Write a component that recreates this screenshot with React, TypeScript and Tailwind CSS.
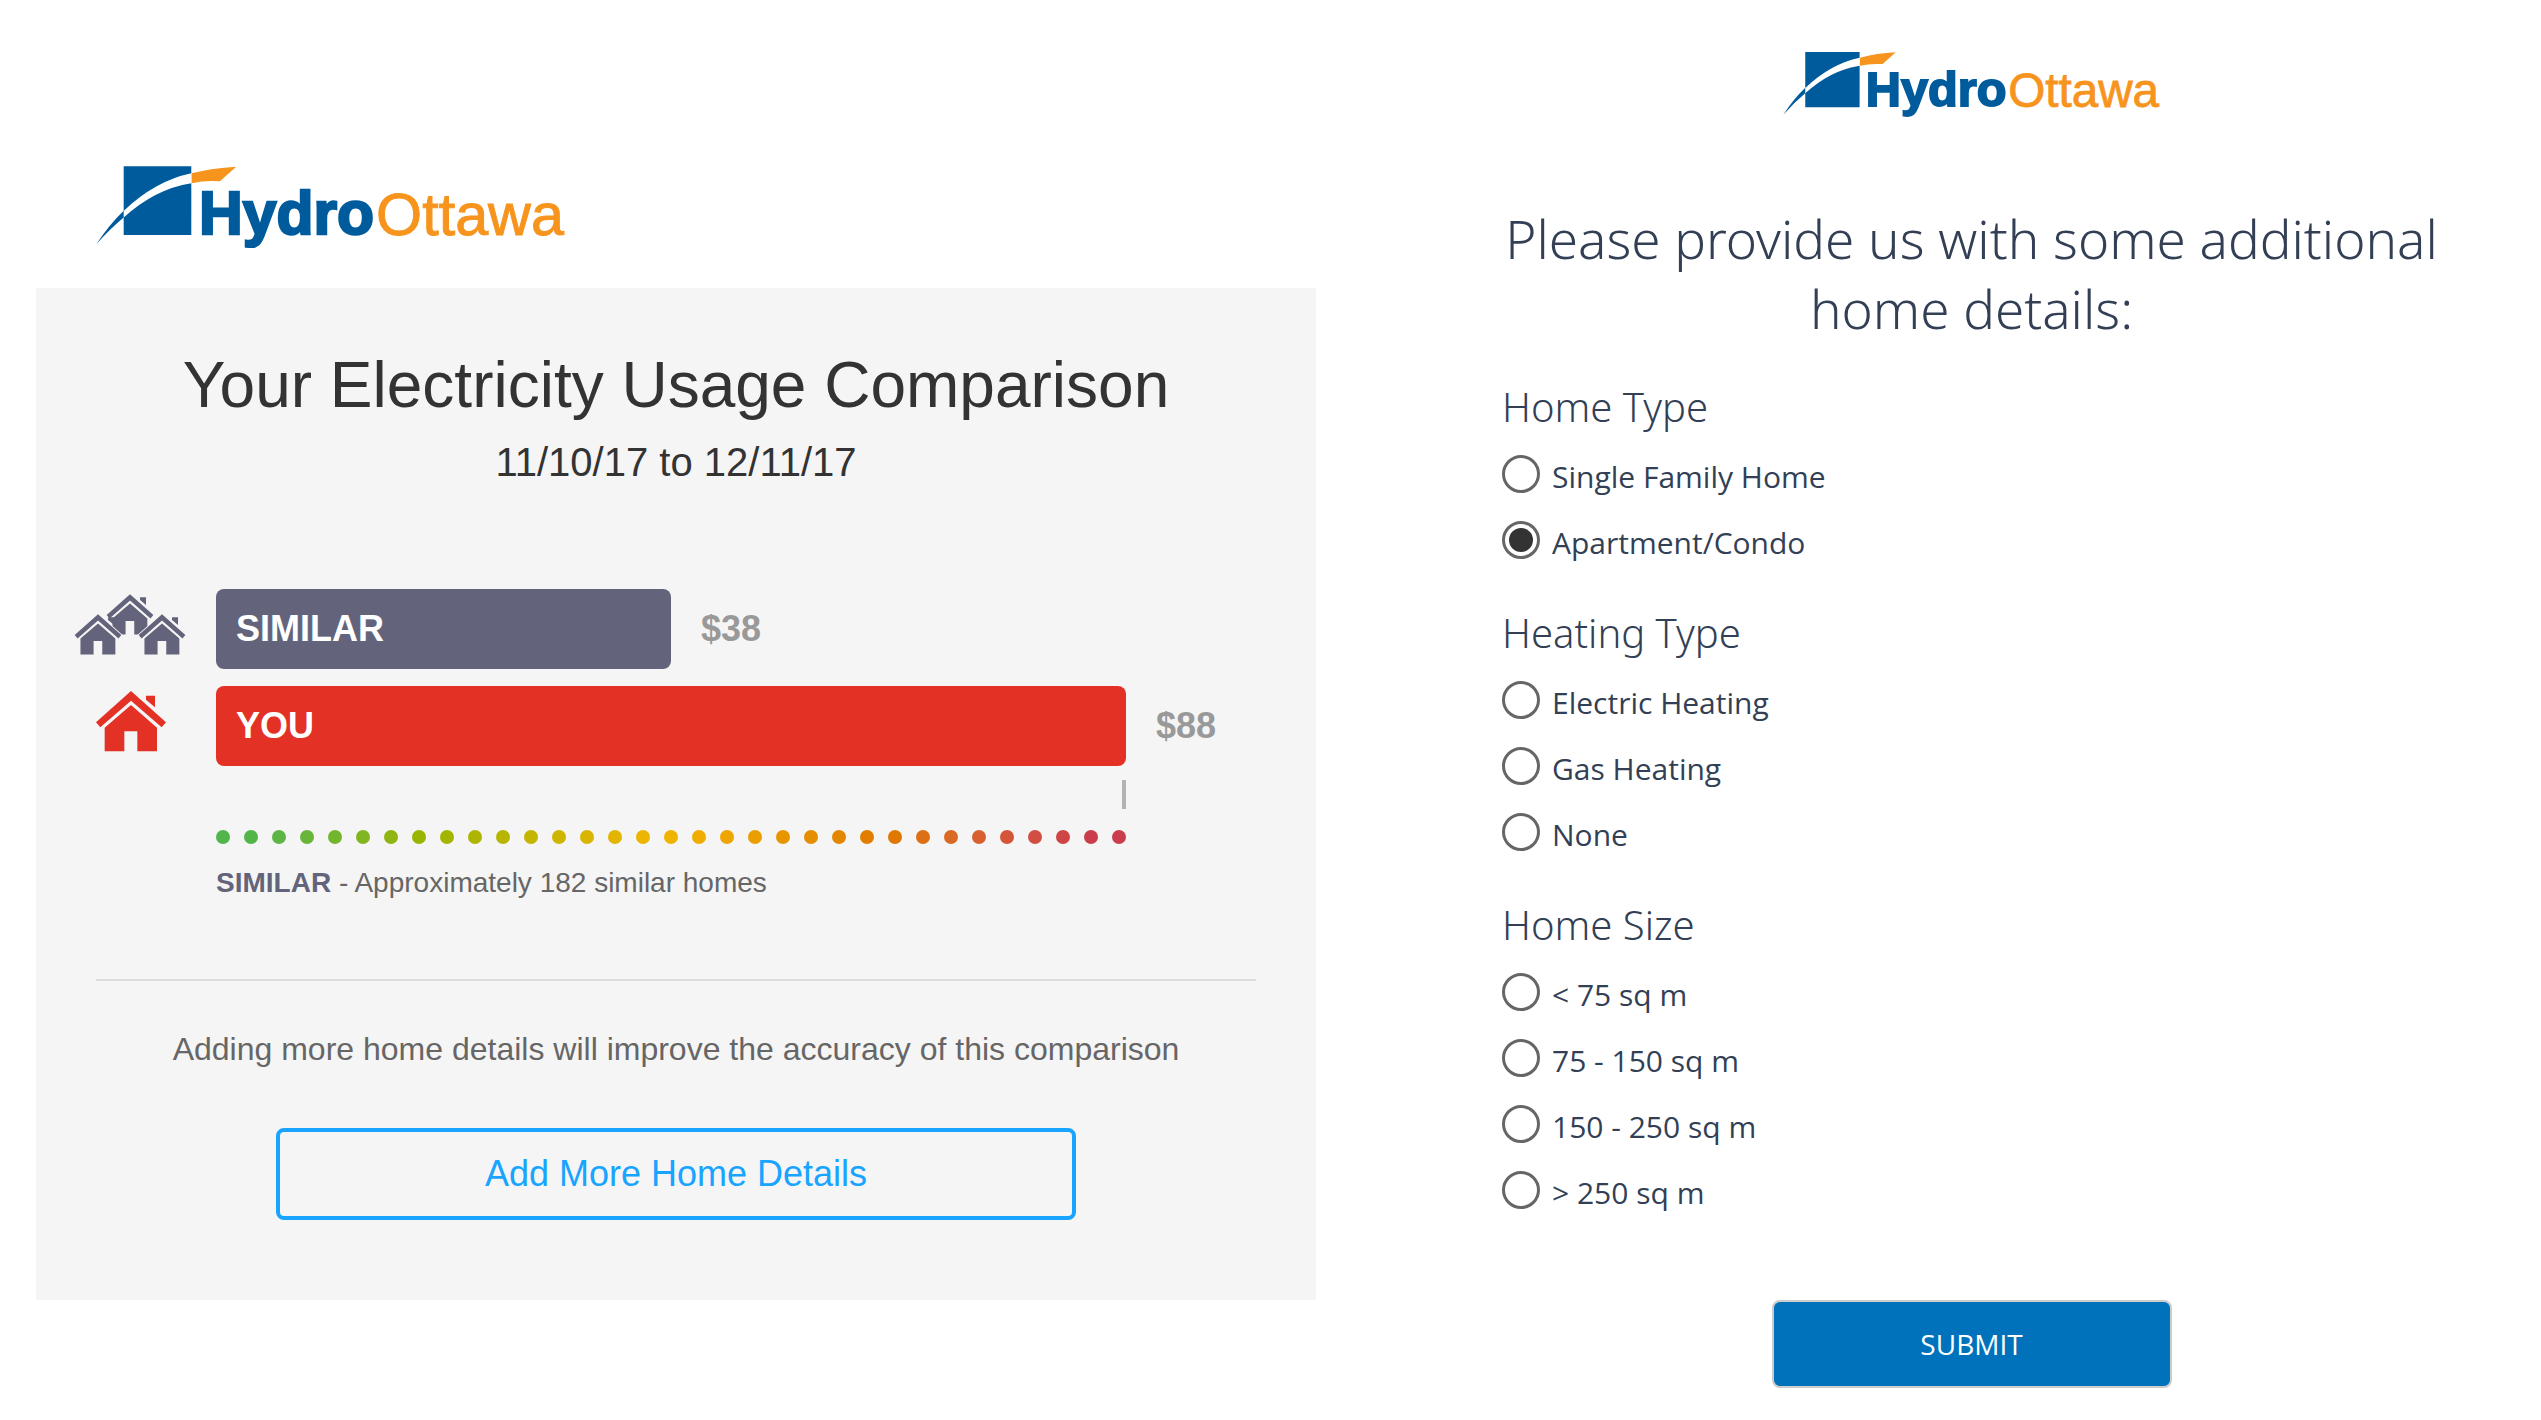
import React, { useState } from 'react';

function Logo({ className }: { className: string }) {
  return (
    <svg viewBox="48 74 1408 248" className={className} role="img" aria-label="HydroOttawa">
      <path fill="#005b9c" d="M131 78H334V99Q225 122 131 212Z" />
      <path fill="#005b9c" d="M131 232Q225 146 334 129V284H131Z" />
      <path fill="#005b9c" d="M131 211V232Q90 266 49 312Q85 255 131 211Z" />
      <path fill="#f7941d" d="M335 99Q396 83 469 79L420 123Q374 120 335 129Z" />
      <text x="357" y="281" fontFamily="Liberation Sans, sans-serif" fontWeight="700" fontSize="182" fill="#005b9c" stroke="#005b9c" strokeWidth="7">
        Hydro
      </text>
      <text x="889" y="283" fontFamily="Liberation Sans, sans-serif" fontSize="178" fill="#f7941d" stroke="#f7941d" strokeWidth="3">
        Ottawa
      </text>
    </svg>
  );
}

const ROOF = 'M213 368L318 462L305 477L213 397L121 477L108 462Z';
const CHIMNEY = 'M258 382H285V417L258 394Z';
const BODY = 'M213 410L291 478V549H232V489H193V549H134V478Z';

function House({ halo }: { halo?: boolean }) {
  return (
    <g>
      {halo && <path d="M213 368L318 462L305 477L291 478V549H134V478L121 477L108 462Z" fill="#f5f5f5" stroke="#f5f5f5" strokeWidth="8" />}
      <path d={CHIMNEY} />
      <path d={ROOF} />
      <path d={BODY} />
    </g>
  );
}

function HomeIcon() {
  return (
    <svg viewBox="108 368 210 182" className="w-[70px] fill-[#e43126]" aria-hidden="true">
      <House />
    </svg>
  );
}

function NeighbourhoodIcon() {
  return (
    <svg viewBox="42 78 336 181" className="w-[112px] fill-[#63647b]" aria-hidden="true">
      <g transform="translate(68 -167) scale(.667)">
        <House />
      </g>
      <g transform="translate(-28 -107) scale(.667)">
        <House halo />
      </g>
      <g transform="translate(164 -107) scale(.667)">
        <House halo />
      </g>
    </svg>
  );
}

const DOTS = [
  '#52b54a', '#52b54a', '#5cb545', '#68b53a', '#74b52e', '#82b522', '#8fb512', '#9ab500', '#a3b500',
  '#aeb500', '#b8b500', '#c3b500', '#ceb500', '#d9b500', '#e3b500', '#ecb500', '#f0b400', '#f0ad00',
  '#eea500', '#eb9e00', '#e89600', '#e58e00', '#e38600', '#e17e00', '#df7800', '#dd7014', '#da6924',
  '#d75f30', '#d4553a', '#d04e42', '#cd4545', '#ca3e4b', '#ca3d4d',
];

const BARS = [
  { label: 'SIMILAR', value: 38, share: 50, color: 'bg-[#63647b]', icon: <NeighbourhoodIcon />, pad: 'pl-[38px]' },
  { label: 'YOU', value: 88, share: 100, color: 'bg-[#e43126]', icon: <HomeIcon />, pad: 'pl-[60px]' },
];

function Comparison() {
  return (
    <section className="pl-9 pt-[165px] font-['Liberation_Sans',sans-serif]">
      <Logo className="ml-[60px] block w-[469px]" />
      <div className="mt-10 bg-[#f5f5f5] pb-20 pt-[61px]">
        <h1 className="text-center text-[64px] leading-[72px] text-[#333]">Your Electricity Usage Comparison</h1>
        <p className="mt-[17px] text-center text-[40px] leading-[48px] text-[#333]">11/10/17 to 12/11/17</p>

        <div className="mt-[103px] flex flex-col gap-[17px]">
          {BARS.map((bar) => (
            <div key={bar.label} className="flex items-center">
              <div className={`w-[180px] pb-2 ${bar.pad}`}>{bar.icon}</div>
              <div className="mr-[190px] flex flex-1 items-center text-[36px] font-bold">
                <div className={`flex h-20 shrink-0 items-center rounded-lg pl-5 text-white ${bar.color}`} style={{ width: `${bar.share}%` }}>
                  {bar.label}
                </div>
                <span className="ml-[30px] text-[#999]">${bar.value}</span>
              </div>
            </div>
          ))}
        </div>

        <div className="ml-[180px] mr-[190px] mt-[14px]">
          <div className="ml-auto h-[29px] w-1 bg-[#b3b3b3]" />
          <div className="mt-[21px] flex justify-between">
            {DOTS.map((color, i) => (
              <span key={i} className="size-[14px] rounded-full" style={{ backgroundColor: color }} />
            ))}
          </div>
          <p className="mt-[23px] text-[28px] leading-8 text-[#666]">
            <strong className="text-[#63647b]">SIMILAR</strong> - Approximately 182 similar homes
          </p>
        </div>

        <hr className="mx-[60px] mt-20 border-t-2 border-[#dcdcdc]" />
        <p className="mt-[50px] text-center text-[32px] leading-9 text-[#666]">
          Adding more home details will improve the accuracy of this comparison
        </p>
        <button type="button" className="mx-auto mt-[61px] block h-[92px] w-5/8 rounded-lg border-4 border-[#18a4ff] text-[36px] text-[#18a4ff]">
          Add More Home Details
        </button>
      </div>
    </section>
  );
}

const GROUPS = [
  { name: 'Home Type', options: ['Single Family Home', 'Apartment/Condo'] },
  { name: 'Heating Type', options: ['Electric Heating', 'Gas Heating', 'None'] },
  { name: 'Home Size', options: ['< 75 sq m', '75 - 150 sq m', '150 - 250 sq m', '> 250 sq m'] },
];

function DetailsForm() {
  const [picked, setPicked] = useState<Record<string, string>>({ 'Home Type': 'Apartment/Condo' });
  return (
    <section className="pl-[186px] pr-[100px] pt-[51px] font-['Open_Sans',sans-serif] text-[#333f55]">
      <Logo className="mx-auto block w-[377px]" />
      <h2 className="mt-[87px] text-center font-['Noto_Sans',sans-serif] text-[53px] font-light leading-[70px]">
        Please provide us with some additional home details:
      </h2>
      <form className="mt-[35px]" onSubmit={(e) => e.preventDefault()}>
        <div className="flex flex-col gap-8">
          {GROUPS.map((group) => (
            <fieldset key={group.name}>
              <legend className="mb-[6px] font-['Noto_Sans',sans-serif] text-[40px] font-light leading-[56px]">{group.name}</legend>
              {group.options.map((option) => (
                <label key={option} className="flex h-[66px] items-center gap-3 text-[30px]">
                  <input
                    type="radio"
                    name={group.name}
                    checked={picked[group.name] === option}
                    onChange={() => setPicked({ ...picked, [group.name]: option })}
                    className="grid size-[38px] appearance-none place-items-center rounded-full border-3 border-[#666] bg-white before:size-6 before:rounded-full checked:before:bg-[#333]"
                  />
                  <span className="pt-1">{option}</span>
                </label>
              ))}
            </fieldset>
          ))}
        </div>
        <button type="submit" className="mx-auto mt-[77px] block h-[88px] w-[400px] rounded-lg border-2 border-[#ccc] bg-[#0072bc] text-[28px] text-white">
          SUBMIT
        </button>
      </form>
    </section>
  );
}

export default function App() {
  return (
    <main className="grid min-h-screen grid-cols-[1316fr_1225fr] bg-white">
      <Comparison />
      <DetailsForm />
    </main>
  );
}
